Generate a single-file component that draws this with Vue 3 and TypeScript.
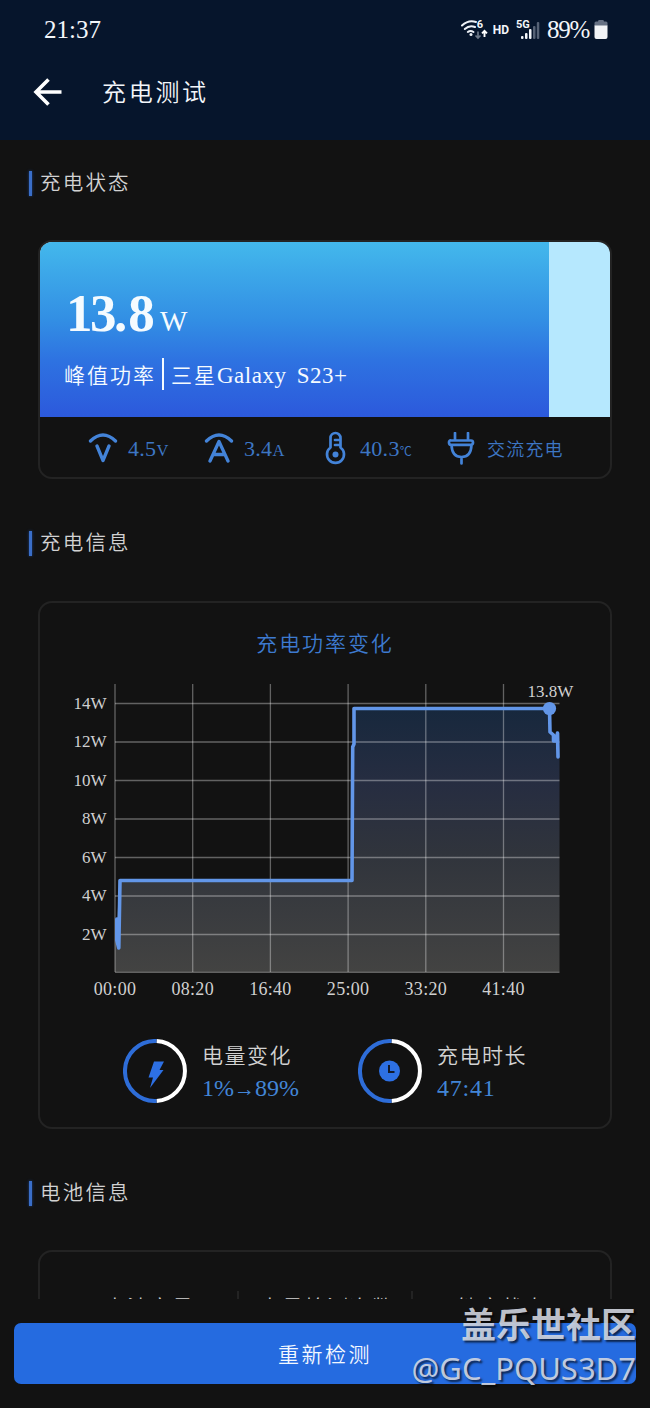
<script setup lang="ts">
interface Tick {
  label: string
  pos: number
}

const level = 89.3

const yTicks: Tick[] = [14, 12, 10, 8, 6, 4, 2].map((w, i) => ({ label: `${w}W`, pos: 21.5 + i * 38.5 }))
const xTicks: Tick[] = ['00:00', '08:20', '16:40', '25:00', '33:20', '41:40'].map((label, i) => ({
  label,
  pos: 55 + i * 77.7,
}))

const powerLine =
  'M56.800 237V258L58.800 266L60 198.5H292L292.7 65L294 62V26.5H489.5L490 50L493.5 53V59H496L497.5 51L498 75'
const powerArea =
  'M55 290V237H57L60 198.5H292L292.7 65L294 62V26.5H489.5L490 50L493.5 53L499.5 51V290Z'
</script>

<template>
  <div class="screen">
    <header class="top">
      <div class="status">
        <span class="clock">21:37</span>
        <div class="indicators">
          <svg class="wifi" width="28" height="22" viewBox="0 0 28 22">
            <g fill="none" stroke="#eef2f8" stroke-width="2" stroke-linecap="round">
              <path d="M2 6.5Q8.500 .5 16 3" />
              <path d="M4.800 10Q9.500 5.600 15 8" />
              <path d="M7.800 13Q10.500 10.900 13.500 13" />
            </g>
            <circle cx="11" cy="15.500" r="1.500" fill="#eef2f8" />
            <text x="16.700" y="9" class="tiny">6</text>
            <path d="M18 12.500V19M15.500 16.500L18 19L20.500 16.500" fill="none" stroke="#6d7889" stroke-width="1.700" />
            <path d="M24.500 18V12M22 14.300L24.500 11.800L27 14.300" fill="none" stroke="#fff" stroke-width="1.900" />
          </svg>
          <span class="hd">HD</span>
          <svg class="signal" width="25" height="22" viewBox="0 0 25 22">
            <text x="0" y="8.500" class="tiny">5G</text>
            <g fill="#f4f6fa">
              <rect x="5" y="17" width="2.500" height="3" rx="1" />
              <rect x="9" y="14" width="2.500" height="6" rx="1" />
              <rect x="13" y="10" width="2.500" height="10" rx="1" />
            </g>
            <g fill="#566276">
              <rect x="17" y="7" width="2.500" height="13" rx="1" />
              <rect x="20.800" y="3" width="2.500" height="17" rx="1" />
            </g>
          </svg>
          <span class="percent">89%</span>
          <svg width="14" height="22" viewBox="0 0 14 22">
            <path d="M4 2.500Q4 1 5 1H9Q10 1 10 2.500H12Q13.500 2.500 13.500 4V7H.5V4Q.5 2.500 2 2.500Z" fill="#657083" />
            <path d="M.5 6.500H13.500V18Q13.500 20 11.500 20H2.500Q.5 20 .5 18Z" fill="#f1f3f6" />
          </svg>
        </div>
      </div>
      <div class="titlebar">
        <svg width="30" height="30" viewBox="0 0 30 30">
          <path d="M28.500 15H3M15.500 2.500L3 15L15.500 27.500" fill="none" stroke="#fff" stroke-width="3.600" />
        </svg>
        <h1>充电测试</h1>
      </div>
    </header>

    <main class="content">
      <h2>充电状态</h2>
      <section class="card state">
        <div class="gauge">
          <div class="fill" :style="{ width: level + '%' }"></div>
          <div class="gauge-text">
            <div class="power"><b>13<span class="dot">.</span>8</b><span class="unit">W</span></div>
            <div class="model"><span class="peak">峰值功率</span><i></i><span class="name">三星<em>Galaxy S23+</em></span></div>
          </div>
        </div>
        <div class="metrics">
          <div class="metric volt">
            <svg width="30" height="32" viewBox="0 0 30 32">
              <path d="M2.500 8Q15 -4 27.500 8M9 13L15 27.500L21 13" />
            </svg>
            <span>4.5<small>V</small></span>
          </div>
          <div class="metric amp">
            <svg width="30" height="32" viewBox="0 0 30 32">
              <path d="M2.500 8Q15 -4 27.500 8M6 28L15 8.500L24 28M9.500 21.500H20.500" />
            </svg>
            <span>3.4<small>A</small></span>
          </div>
          <div class="metric temp">
            <svg width="22" height="36" viewBox="0 0 22 36">
              <g stroke-width="2.700">
                <path d="M5.500 16.500V7A5 5 0 0 1 15.500 7V16.500A8.500 8.500 0 1 1 5.500 16.500ZM10 9H15M10 14H15" />
              </g>
              <circle cx="10.500" cy="23.500" r="3" fill="#4383d8" stroke="none" />
            </svg>
            <span>40.3<small class="deg">℃</small></span>
          </div>
          <div class="metric plug">
            <svg width="28" height="34" viewBox="0 0 28 34">
              <g stroke-width="2.700">
                <path d="M8 1V8M21 1V8M4 8.500H24Q26 8.500 26 10.500T24 12.800H4Q2 12.800 2 10.500T4 8.500ZM4.500 13Q5 25 14.500 25Q24 25 24.500 13M14.500 25V31.500" />
              </g>
            </svg>
            <span class="cn">交流充电</span>
          </div>
        </div>
      </section>

      <h2>充电信息</h2>
      <section class="card info">
        <h3>充电功率变化</h3>
        <svg class="chart" width="540" height="324" viewBox="0 0 540 324">
          <defs>
            <linearGradient id="areaFill" x1="0" y1="26" x2="0" y2="290" gradientUnits="userSpaceOnUse">
              <stop offset="0" stop-color="#17283d" />
              <stop offset=".28" stop-color="#262d41" />
              <stop offset=".55" stop-color="#30343c" />
              <stop offset="1" stop-color="#434342" />
            </linearGradient>
          </defs>
          <path :d="powerArea" fill="url(#areaFill)" />
          <g stroke="#fff" stroke-opacity=".34" stroke-width="1.300">
            <line v-for="t in yTicks" :key="t.label" x1="55" x2="499.500" :y1="t.pos" :y2="t.pos" />
            <line v-for="t in xTicks" :key="t.label" :x1="t.pos" :x2="t.pos" y1="2" y2="290" />
            <line x1="55" x2="499.500" y1="290.300" y2="290.300" />
          </g>
          <path :d="powerLine" fill="none" stroke="#6296e8" stroke-width="3.600" stroke-linejoin="round" stroke-linecap="round" />
          <circle cx="489.500" cy="26.500" r="6.600" fill="#6296e8" />
          <g class="axis">
            <text v-for="t in yTicks" :key="t.label" x="46.500" :y="t.pos + 5" text-anchor="end">{{ t.label }}</text>
            <text v-for="t in xTicks" :key="t.label" class="time" :x="t.pos" y="313" text-anchor="middle">{{ t.label }}</text>
            <text x="490.500" y="15" text-anchor="middle">13.8W</text>
          </g>
        </svg>
        <div class="summary">
          <div class="stat">
            <svg width="64" height="64" viewBox="0 0 64 64">
              <path d="M33.500 2.040A30 30 0 0 1 33.500 61.960" fill="none" stroke="#fff" stroke-width="4" />
              <path d="M33.500 2.040A30 30 0 1 0 33.500 61.960" fill="none" stroke="#2e6dd8" stroke-width="4" />
              <path d="M31 22.500H41L36.500 31H40.500L27 49L30 38.500H25.500Z" fill="#2d70e4" />
            </svg>
            <div><p>电量变化</p><strong>1%<span class="arrow">→</span>89%</strong></div>
          </div>
          <div class="stat duration">
            <svg width="64" height="64" viewBox="0 0 64 64">
              <path d="M33.500 2.040A30 30 0 0 1 33.500 61.960" fill="none" stroke="#fff" stroke-width="4" />
              <path d="M33.500 2.040A30 30 0 1 0 33.500 61.960" fill="none" stroke="#2e6dd8" stroke-width="4" />
              <circle cx="31.500" cy="32" r="10.500" fill="#2d70e4" />
              <path d="M31 26V33H36.500" fill="none" stroke="#121a2c" stroke-width="2" />
            </svg>
            <div><p>充电时长</p><strong class="wide">47:41</strong></div>
          </div>
        </div>
      </section>

      <h2>电池信息</h2>
      <section class="card battery">
        <div>电池容量</div>
        <div>电量检测次数</div>
        <div>健康状态</div>
      </section>
    </main>

    <footer class="bottom">
      <button type="button">重新检测</button>
    </footer>

    <div class="watermark">
      <div class="community">盖乐世社区</div>
      <div class="user">@GC_PQUS3D7</div>
    </div>
  </div>
</template>

<style>
body {
  background: #121212;
}
</style>

<style scoped>
.screen {
  position: relative;
  display: flex;
  flex-direction: column;
  width: 650px;
  height: 1408px;
  overflow: hidden;
  background: #121212;
  color: #d2d2d2;
  font-family: 'Liberation Serif', 'Noto Sans CJK SC', serif;
}
h1, h2, h3, p {
  margin: 0;
  font-weight: 350;
}
.top {
  height: 140px;
  flex: none;
  background: #06152c;
  color: #f3f6fa;
}
.status {
  display: flex;
  justify-content: space-between;
  align-items: center;
  height: 60px;
  padding: 0 42px 0 44px;
}
.clock {
  font-size: 25px;
}
.indicators {
  display: flex;
  align-items: center;
}
.tiny {
  font: bold 11px Roboto, sans-serif;
  fill: #f4f6fa;
}
.hd {
  margin: 0 7px 0 5px;
  font: bold 12px Roboto, sans-serif;
}
.percent {
  width: 44px;
  margin: 0 3px 0 6px;
  font-size: 25px;
  letter-spacing: -1.200px;
}
.titlebar {
  display: flex;
  align-items: center;
  gap: 39px;
  height: 64px;
  padding-left: 33px;
}
h1 {
  padding-top: 2px;
  font-size: 24px;
  line-height: 36px;
  letter-spacing: 2.700px;
}
.content {
  height: 1159px;
  flex: none;
  overflow: hidden;
  padding: 30px 38px 0;
  box-sizing: border-box;
}
h2 {
  display: flex;
  align-items: center;
  height: 26px;
  margin: 0 0 45px -9px;
  font-size: 20.500px;
  line-height: 26px;
  letter-spacing: 2.200px;
}
h2:first-child {
  margin-bottom: 44px;
}
h2::before {
  content: '';
  width: 3px;
  height: 25px;
  margin-right: 8px;
  background: #3a6ec8;
  box-shadow: 0 0 3px #1d4488;
}
.card {
  box-sizing: border-box;
  width: 574px;
  margin-bottom: 51px;
  border: 2px solid #232323;
  border-radius: 14px;
  overflow: hidden;
}
.state {
  height: 239px;
}
.gauge {
  display: grid;
  height: 175px;
  background: #b6e8fe;
  color: #f5fbff;
}
.gauge > * {
  grid-area: 1 / 1;
}
.fill {
  background: linear-gradient(#43b8ec, #328ee4 45%, #2e72e1 68%, #2c59dc);
}
.gauge-text {
  display: flex;
  flex-direction: column;
  padding: 42px 0 0 25px;
}
.power {
  display: flex;
  align-items: baseline;
  height: 58px;
  line-height: 58px;
}
.power b {
  width: 95px;
  font-size: 53px;
  letter-spacing: -2.500px;
  padding-left: 1px;
  box-sizing: border-box;
}
.power .dot {
  letter-spacing: 1px;
}
.power .unit {
  font-size: 29px;
}
.model {
  display: flex;
  align-items: center;
  height: 34px;
  margin-top: 15px;
  font-size: 21px;
  font-weight: 350;
  white-space: nowrap;
}
.peak {
  letter-spacing: 2px;
  margin-left: -1px;
}
.model i {
  width: 2px;
  height: 32px;
  margin: 0 7px 0 6px;
  background: #f5fbff;
}
.name {
  letter-spacing: 2px;
}
.name em {
  font-size: 23px;
  font-style: normal;
  letter-spacing: .5px;
  word-spacing: 4px;
}
.metrics {
  display: flex;
  height: 60px;
  padding: 2px 0 0 48px;
  box-sizing: border-box;
  color: #3d76c4;
}
.metric {
  display: flex;
  align-items: center;
  height: 60px;
  font-size: 22px;
  white-space: nowrap;
  letter-spacing: .3px;
}
.metric svg {
  flex: none;
  fill: none;
  stroke: #4383d8;
  stroke-width: 3.300;
  stroke-linecap: round;
  stroke-linejoin: round;
}
.metric small {
  font-size: 16.500px;
  letter-spacing: 0;
}
.metric .deg {
  font-size: 12px;
}
.volt {
  width: 116px;
  gap: 10px;
}
.amp {
  width: 121px;
  gap: 10px;
}
.temp {
  width: 122px;
  gap: 13px;
}
.plug {
  gap: 12px;
}
.plug .cn {
  margin-top: -2px;
  font-size: 18px;
  font-weight: 350;
  letter-spacing: 1.200px;
}
.info {
  height: 528px;
}
h3 {
  height: 40px;
  margin-top: 21px;
  color: #3d7ad0;
  font-size: 21px;
  line-height: 40px;
  text-align: center;
  letter-spacing: 1.900px;
}
.chart {
  display: block;
  margin: 18px 0 0 20px;
}
.axis text {
  font-family: 'Liberation Serif', serif;
  font-size: 17px;
  fill: #d0d0d0;
}
.axis .time {
  font-size: 18px;
  letter-spacing: .3px;
}
.summary {
  display: flex;
  padding: 33px 0 0 83px;
}
.stat {
  display: flex;
  gap: 15px;
  width: 235px;
}
.stat p {
  height: 32px;
  font-size: 21px;
  line-height: 34px;
  letter-spacing: 1.500px;
}
.stat strong {
  display: block;
  height: 32px;
  color: #4285d6;
  font-size: 24px;
  font-weight: 400;
  line-height: 34px;
  white-space: nowrap;
}
.stat .wide {
  letter-spacing: .8px;
}
.arrow {
  font-size: 21px;
}
.battery {
  display: flex;
  height: 300px;
  margin-top: -1px;
  padding-top: 39px;
  font-size: 21px;
  font-weight: 350;
}
.battery div {
  height: 100px;
  flex: 0 0 199px;
  box-sizing: border-box;
  padding: 0 0 0 22px;
  text-align: center;
  letter-spacing: 1.500px;
  border-right: 2px solid #232323;
}
.battery div:nth-child(2) {
  flex-basis: 174px;
  padding-left: 4px;
}
.battery div:last-child {
  flex: 1;
  padding: 0 20px 0 0;
  border: 0;
}
.bottom {
  display: flex;
  height: 109px;
  padding: 24px 14px 0;
  box-sizing: border-box;
}
button {
  width: 622px;
  height: 61px;
  padding: 0 0 2px;
  border: 0;
  border-radius: 7px;
  background: #256be0;
  color: #f3f8ff;
  font-family: inherit;
  font-size: 21px;
  font-weight: 350;
  letter-spacing: 2.500px;
}
.watermark {
  position: absolute;
  right: 14px;
  bottom: 17px;
  color: rgba(214, 218, 228, .88);
  text-align: right;
  white-space: nowrap;
  text-shadow: 2px 2px 2px rgba(0, 0, 0, .65);
}
.community {
  font: bold 35px/44px 'Noto Sans CJK SC', sans-serif;
}
.user {
  font: 31px/46px 'Noto Sans', sans-serif;
}
</style>
